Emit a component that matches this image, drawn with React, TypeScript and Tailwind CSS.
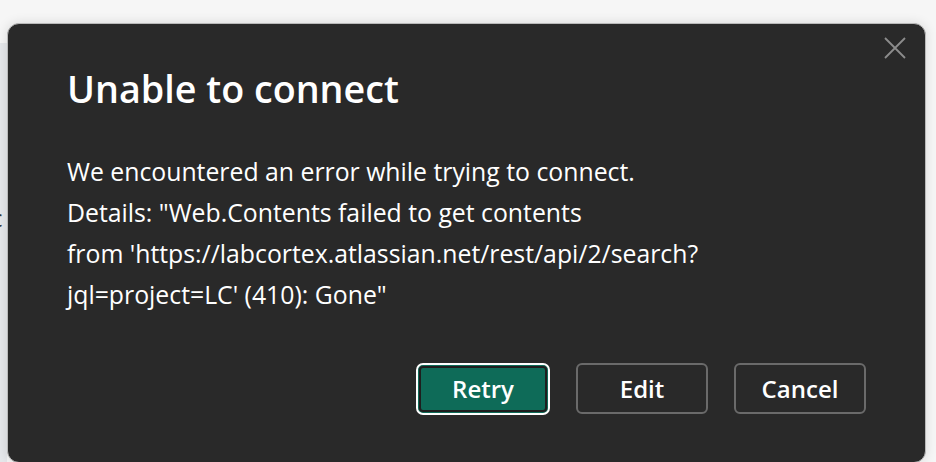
const font = { fontFamily: '"Open Sans", "Noto Sans", sans-serif' };

function ActionButton({ label, primary }: { label: string; primary?: boolean }) {
  if (primary) {
    return (
      <button className="w-[134px] h-[52px] rounded-[7px] border-2 border-white bg-[#0e6b58] shadow-[inset_0_0_0_1px_#0e6b58,inset_0_0_0_3px_#1e1e1e] text-white text-[24px] font-semibold">
        {label}
      </button>
    );
  }
  return (
    <button className="w-[132px] h-[51px] rounded-[6px] border-2 border-[#6a6a6a] bg-transparent text-white text-[24px] font-semibold">
      {label}
    </button>
  );
}

export default function App() {
  return (
    <div className="w-[936px] h-[462px] overflow-hidden bg-[#f6f6f6] flex pt-[23px]" style={font}>
      {/* page content peeking out behind the dialog */}
      <div className="w-[7px] h-[428px] mt-[20px] bg-[#e6e8eb] overflow-hidden">
        <div className="mt-[160px] -ml-[9px] text-[24px] leading-[30px] text-[#333]">c</div>
      </div>
      <div className="relative w-[919px] h-[440px] rounded-xl bg-[#292929] border border-[#b9b9b9] shadow-[0_0_12px_rgba(0,0,0,0.12)] flex flex-col px-[59px]">
        <button className="absolute right-[19px] top-[13px]">
          <svg width="22" height="22" viewBox="0 0 22 22" fill="none" stroke="#8c8c8c" strokeWidth="1.8">
            <path d="M1 1 L21 21 M21 1 L1 21" />
          </svg>
        </button>
        <h1 className="mt-[40px] text-[37.7px] leading-[50px] font-semibold text-white">Unable to connect</h1>
        <div className="mt-[37px] text-[24.8px] leading-[41px] text-white">
          <p>We encountered an error while trying to connect.</p>
          <p>Details: "Web.Contents failed to get contents</p>
          <p>from 'https://labcortex.atlassian.net/rest/api/2/search?</p>
          <p>jql=project=LC' (410): Gone"</p>
        </div>
        <div className="mt-[48px] flex justify-end gap-[26px]">
          <ActionButton label="Retry" primary />
          <ActionButton label="Edit" />
          <ActionButton label="Cancel" />
        </div>
      </div>
    </div>
  );
}
